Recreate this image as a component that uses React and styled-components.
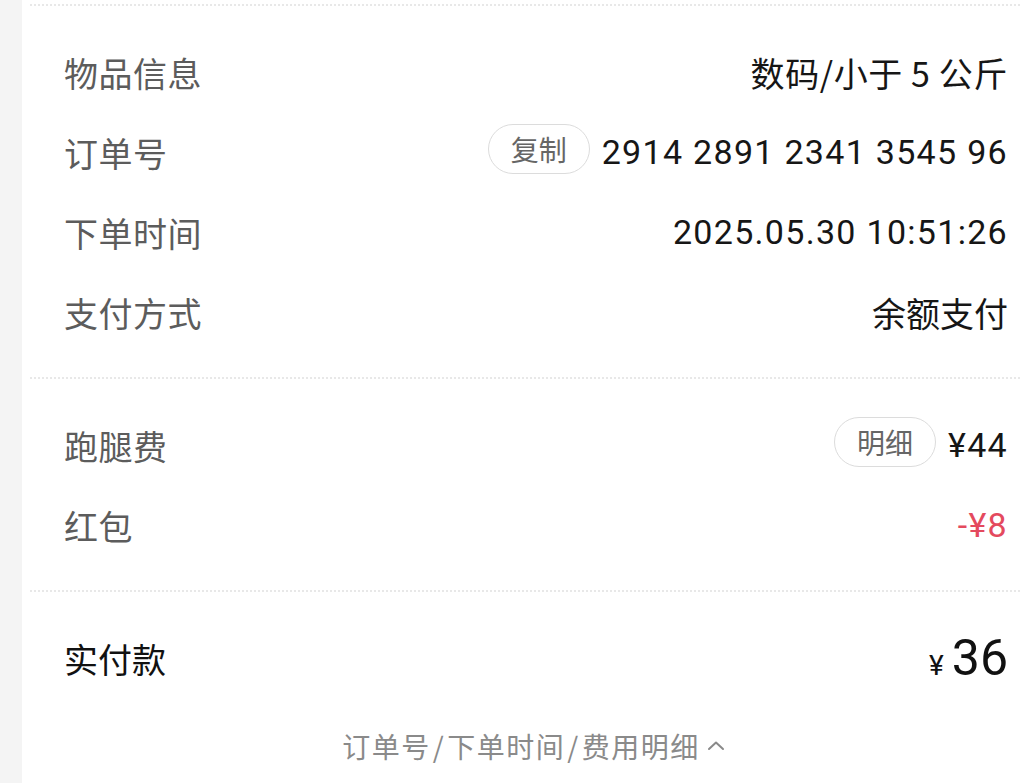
import styled, { createGlobalStyle } from 'styled-components';

const GlobalStyle = createGlobalStyle`
  html, body {
    margin: 0;
    padding: 0;
    background: #f4f4f4;
  }
  body {
    font-family: "Noto Sans CJK SC", "Noto Sans", sans-serif;
  }
`;

const infoRows = [
  { label: '物品信息', value: '数码/小于 5 公斤', spaced: true },
  { label: '订单号', value: '2914 2891 2341 3545 96', pill: '复制', digits: true },
  { label: '下单时间', value: '2025.05.30 10:51:26', digits: true },
  { label: '支付方式', value: '余额支付' },
];

function App() {
  return (
    <>
      <GlobalStyle />
      <Page>
        <Card>
          <Divider />
          <Section>
            {infoRows.map((row) => (
              <Row key={row.label}>
                <Label>{row.label}</Label>
                <Right>
                  {row.pill && <Pill>{row.pill}</Pill>}
                  <Value $digits={row.digits} $spaced={row.spaced}>{row.value}</Value>
                </Right>
              </Row>
            ))}
          </Section>
          <Divider />
          <Section>
            <Row>
              <Label>跑腿费</Label>
              <Right>
                <Pill>明细</Pill>
                <Value $digits>¥44</Value>
              </Right>
            </Row>
            <Row>
              <Label>红包</Label>
              <Right>
                <Value $digits $red>-¥8</Value>
              </Right>
            </Row>
          </Section>
          <Divider />
          <TotalRow>
            <TotalLabel>实付款</TotalLabel>
            <Total>
              <Yen>¥</Yen>
              <Amount>36</Amount>
            </Total>
          </TotalRow>
          <Footer>
            订单号<Slash>/</Slash>下单时间<Slash>/</Slash>费用明细
            <svg width="20" height="14" viewBox="0 0 20 14">
              <path d="M3 10 L10 3.5 L17 10" fill="none" stroke="#8a8a8a" strokeWidth="2" strokeLinecap="round" strokeLinejoin="round" />
            </svg>
          </Footer>
        </Card>
      </Page>
    </>
  );
}

const Page = styled.div`
  width: 1024px;
  height: 783px;
  overflow: hidden;
  display: flex;
  background: #f4f4f4;
`;

const Card = styled.div`
  flex: 1;
  margin-left: 22px;
  background: #fff;
  padding-top: 4px;
  display: flex;
  flex-direction: column;
`;

const Divider = styled.div`
  margin: 0 4px 0 8px;
  border-top: 2px dotted #e8e8e8;
`;

const Section = styled.div`
  padding: 26px 16px 25px 42px;
  display: flex;
  flex-direction: column;
`;

const Row = styled.div`
  height: 80px;
  display: flex;
  align-items: center;
  justify-content: space-between;
`;

const Label = styled.span`
  font-size: 34px;
  color: #5c5c5c;
  letter-spacing: 0.5px;
`;

const Right = styled.div`
  display: flex;
  align-items: center;
  gap: 12px;
`;

const Pill = styled.span`
  height: 48px;
  padding: 0 22px;
  display: inline-flex;
  align-items: center;
  border: 1.5px solid #dcdcdc;
  border-radius: 25px;
  font-size: 28px;
  color: #666;
  margin-top: -6px;
`;

const Value = styled.span`
  font-size: 34px;
  color: ${(p) => (p.$red ? '#e44a5e' : '#161616')};
  font-family: ${(p) => (p.$digits ? '"Roboto", "Noto Sans CJK SC", sans-serif' : 'inherit')};
  letter-spacing: ${(p) => (p.$digits ? '1.3px' : p.$spaced ? '0.6px' : '0')};
`;

const TotalRow = styled(Row)`
  margin: 26px 16px 0 42px;
`;

const TotalLabel = styled.span`
  font-size: 34px;
  color: #111;
`;

const Total = styled.div`
  display: flex;
  align-items: baseline;
  gap: 8px;
  color: #111;
  font-family: "Roboto", sans-serif;
`;

const Yen = styled.span`
  font-size: 28px;
`;

const Amount = styled.span`
  font-size: 50px;
  font-weight: 400;
`;

const Footer = styled.div`
  margin: 28px 0 0 22px;
  display: flex;
  align-items: center;
  justify-content: center;
  font-size: 28px;
  letter-spacing: 1.5px;
  color: #8a8a8a;

  svg {
    margin-left: 6px;
  }
`;

const Slash = styled.span`
  padding: 0 2px;
`;

export default App;
